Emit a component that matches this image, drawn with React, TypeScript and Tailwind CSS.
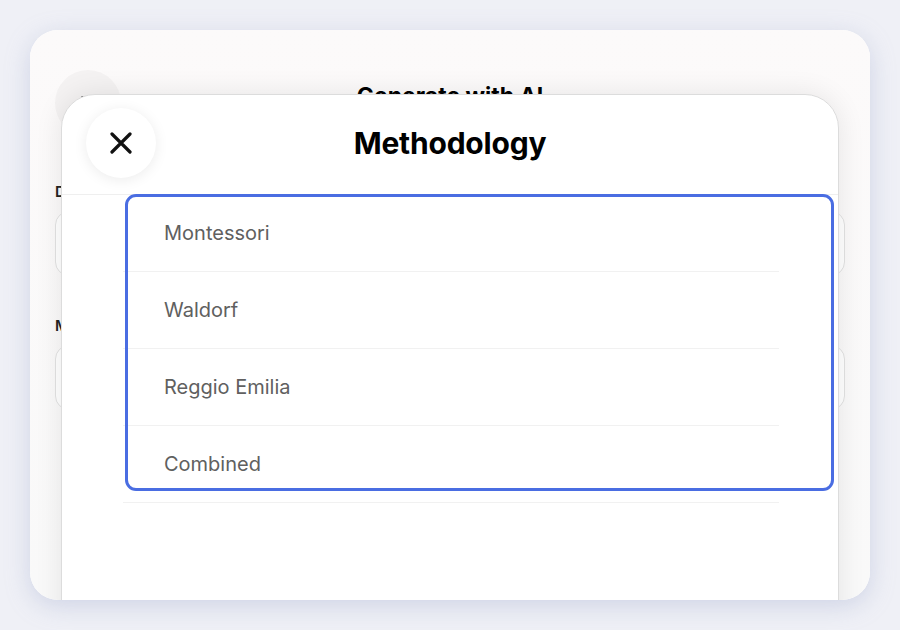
import { X } from "lucide-react";

const methods = ["Montessori", "Waldorf", "Reggio Emilia", "Combined"];

function CloseIcon() {
  return (
    <svg width="22" height="22" viewBox="0 0 22 22" fill="none">
      <path
        d="M2 2L20 20M20 2L2 20"
        stroke="#111"
        strokeWidth="3.2"
        strokeLinecap="round"
      />
    </svg>
  );
}

function BackgroundForm() {
  return (
    <div className="flex flex-col px-[25px] pt-[40px] bg-gradient-to-b from-[#fcfafa] to-[#f9f9f9] h-full">
      <div className="relative flex justify-center h-[66px]">
        <div className="absolute left-0 top-0 w-[66px] h-[66px] rounded-full bg-[#f4f2f2] flex items-center justify-center">
          <X size={22} strokeWidth={3} className="text-[#222]" />
        </div>
        <h2 className="mt-[12px] text-[23px] leading-[28px] font-bold text-black">Generate with AI</h2>
      </div>
      <div className="mt-[45px] flex flex-col gap-[8px]">
        <span className="text-[15px] leading-[22px] font-semibold text-[#222]">Duration</span>
        <div className="h-[65px] rounded-[14px] border border-[#e2e2e2] bg-white" />
      </div>
      <div className="mt-[39px] flex flex-col gap-[8px]">
        <span className="text-[15px] leading-[22px] font-semibold text-[#222]">Methodology</span>
        <div className="h-[65px] rounded-[14px] border border-[#e2e2e2] bg-white" />
      </div>
    </div>
  );
}

function MethodSheet() {
  return (
    <div className="absolute left-[31px] top-[64px] w-[778px] h-[540px] rounded-t-[34px] border border-[#dcdcdc] bg-white shadow-[0_0_28px_rgba(0,0,0,0.09)]">
      <div className="relative flex items-center justify-center h-[100px] pb-[3px] border-b border-[#efefef]">
        <button className="absolute left-[24px] top-[13px] w-[70px] h-[70px] rounded-full bg-white shadow-[0_2px_14px_rgba(0,0,0,0.08)] flex items-center justify-center">
          <CloseIcon />
        </button>
        <h1 className="text-[30px] font-bold text-black tracking-[-0.2px]">Methodology</h1>
      </div>

      <div className="relative">
        <ul className="ml-[61px] w-[656px]">
          {methods.map((m) => (
            <li
              key={m}
              className="h-[77px] flex items-center pl-[41px] border-b border-[#f1f1f1] text-[20px] text-[#606060]"
            >
              {m}
            </li>
          ))}
        </ul>
        <div className="absolute left-[63px] top-[-1px] w-[709px] h-[297px] rounded-[11px] border-[3px] border-[#4a6de2] pointer-events-none" />
      </div>
    </div>
  );
}

export default function App() {
  return (
    <div
      className="w-[900px] h-[630px] bg-[#eff0f6] p-[30px]"
      style={{ fontFamily: "Inter, 'Liberation Sans', sans-serif" }}
    >
      <div className="relative w-[840px] h-[570px] rounded-[28px] overflow-hidden bg-white shadow-[0_6px_24px_rgba(150,160,200,0.35)]">
        <BackgroundForm />
        <MethodSheet />
      </div>
    </div>
  );
}
